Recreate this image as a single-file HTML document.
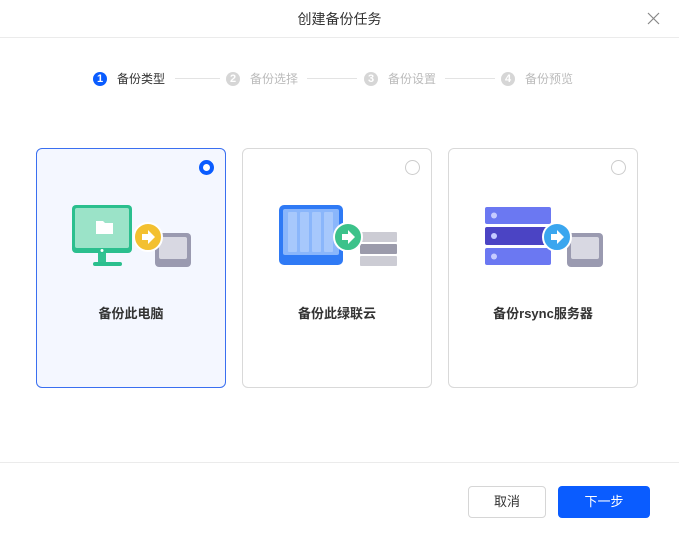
<!DOCTYPE html>
<html><head><meta charset="utf-8"><style>
*{margin:0;padding:0;box-sizing:border-box}
body{width:679px;height:534px;background:#fff;font-family:"Liberation Sans","Noto Sans CJK SC",sans-serif;position:relative;overflow:hidden;color:#333}
.title{position:absolute;top:0;left:0;width:679px;height:38px;line-height:38px;text-align:center;font-size:14px;color:#333;border-bottom:1px solid #ebebeb}
.close{position:absolute;left:647px;top:12px}
.step{position:absolute;top:70px;font-size:12px;color:#bbb;display:flex;align-items:center}
.num{width:14px;height:14px;border-radius:50%;background:#d6d6d6;color:#fff;font-size:11px;font-weight:bold;text-align:center;line-height:14px;margin-right:10px}
.act .num{background:#0a5cff}.act{color:#333}
.line{position:absolute;top:78px;height:1px;background:#e3e3e3}
.card{position:absolute;top:148px;width:190px;height:240px;border:1px solid #d9d9d9;border-radius:6px;background:#fff}
.card.sel{border-color:#3a6ff0;background:#f4f7ff}
.radio{position:absolute;right:11px;top:11px;width:15px;height:15px;border-radius:50%;border:1px solid #ccc;background:#fff}
.sel .radio{border:4px solid #0a5cff}
.lbl{position:absolute;top:154px;width:100%;text-align:center;font-size:13px;font-weight:bold;color:#333}
.card svg{position:absolute;left:0;top:0}
.foot{position:absolute;top:462px;left:0;width:679px;border-top:1px solid #ebebeb}
.btn{position:absolute;top:486px;height:32px;line-height:30px;text-align:center;font-size:13px;border-radius:4px}
</style></head><body>
<div class="title">创建备份任务</div>
<svg class="close" width="13" height="13" viewBox="0 0 13 13"><path d="M1 1L12 12M12 1L1 12" stroke="#888" stroke-width="1.2"/></svg>

<div class="step act" style="left:93px"><div class="num">1</div>备份类型</div>
<div class="line" style="left:175px;width:45px"></div>
<div class="step" style="left:226px"><div class="num">2</div>备份选择</div>
<div class="line" style="left:307px;width:50px"></div>
<div class="step" style="left:364px"><div class="num">3</div>备份设置</div>
<div class="line" style="left:445px;width:50px"></div>
<div class="step" style="left:501px"><div class="num">4</div>备份预览</div>

<div class="card sel" style="left:36px">
<div class="radio"></div>
<svg width="190" height="140" viewBox="0 0 190 140">
<rect x="35" y="56" width="60" height="48" rx="4" fill="#2bbf8e"/>
<rect x="38" y="59" width="54" height="40" rx="2" fill="#9be3c8"/>
<path d="M59 72h7l2 2h8v11h-17z" fill="#fff"/>
<circle cx="65" cy="101.5" r="1.5" fill="#fff"/>
<rect x="61" y="104" width="8" height="10" fill="#33c293"/>
<rect x="56" y="113" width="29" height="4" rx="2" fill="#2bbf8e"/>
<rect x="118" y="84" width="36" height="34" rx="4" fill="#9a9ab0"/>
<rect x="122" y="88" width="28" height="22" rx="2" fill="#d8d8e2"/>
<circle cx="111" cy="88" r="14" fill="#f3c030" stroke="#fff" stroke-width="2"/>
<path d="M105 85h6v-4l7 7-7 7v-4h-6z" fill="#fff"/>
</svg>
<div class="lbl">备份此电脑</div></div>

<div class="card" style="left:242px">
<div class="radio"></div>
<svg width="190" height="140" viewBox="0 0 190 140">
<rect x="36" y="56" width="64" height="60" rx="5" fill="#2f7af5"/>
<rect x="40" y="60" width="56" height="46" rx="2" fill="#8ab6fb"/>
<rect x="45" y="63" width="9" height="40" rx="1" fill="#a7c8fc"/><rect x="57" y="63" width="9" height="40" rx="1" fill="#a7c8fc"/><rect x="69" y="63" width="9" height="40" rx="1" fill="#a7c8fc"/><rect x="81" y="63" width="9" height="40" rx="1" fill="#a7c8fc"/>
<rect x="117" y="83" width="37" height="10" rx="1" fill="#ccccd4"/><rect x="117" y="95" width="37" height="10" rx="1" fill="#9b9bab"/><rect x="117" y="107" width="37" height="10" rx="1" fill="#ccccd4"/>
<circle cx="105" cy="88" r="14" fill="#3cc28a" stroke="#fff" stroke-width="2"/>
<path d="M99 85h6v-4l7 7-7 7v-4h-6z" fill="#fff"/>
</svg>
<div class="lbl">备份此绿联云</div></div>

<div class="card" style="left:448px">
<div class="radio"></div>
<svg width="190" height="140" viewBox="0 0 190 140">
<rect x="36" y="58" width="66" height="17" rx="2" fill="#6b78f2"/>
<rect x="36" y="78" width="66" height="18" rx="2" fill="#4b44c4"/>
<rect x="36" y="99" width="66" height="17" rx="2" fill="#6b78f2"/>
<circle cx="45" cy="66.5" r="3" fill="#c6cbff"/><circle cx="45" cy="87" r="3" fill="#c6cbff"/><circle cx="45" cy="107.5" r="3" fill="#c6cbff"/>
<rect x="118" y="84" width="36" height="34" rx="4" fill="#9a9ab0"/>
<rect x="122" y="88" width="28" height="22" rx="2" fill="#d8d8e2"/>
<circle cx="108" cy="88" r="14" fill="#3aa6ef" stroke="#fff" stroke-width="2"/>
<path d="M102 85h6v-4l7 7-7 7v-4h-6z" fill="#fff"/>
</svg>
<div class="lbl">备份rsync服务器</div></div>

<div class="foot"></div>
<div class="btn" style="left:468px;width:78px;border:1px solid #d6d6d6;color:#333">取消</div>
<div class="btn" style="left:558px;width:92px;background:#0a5cff;color:#fff;line-height:32px">下一步</div>
</body></html>
